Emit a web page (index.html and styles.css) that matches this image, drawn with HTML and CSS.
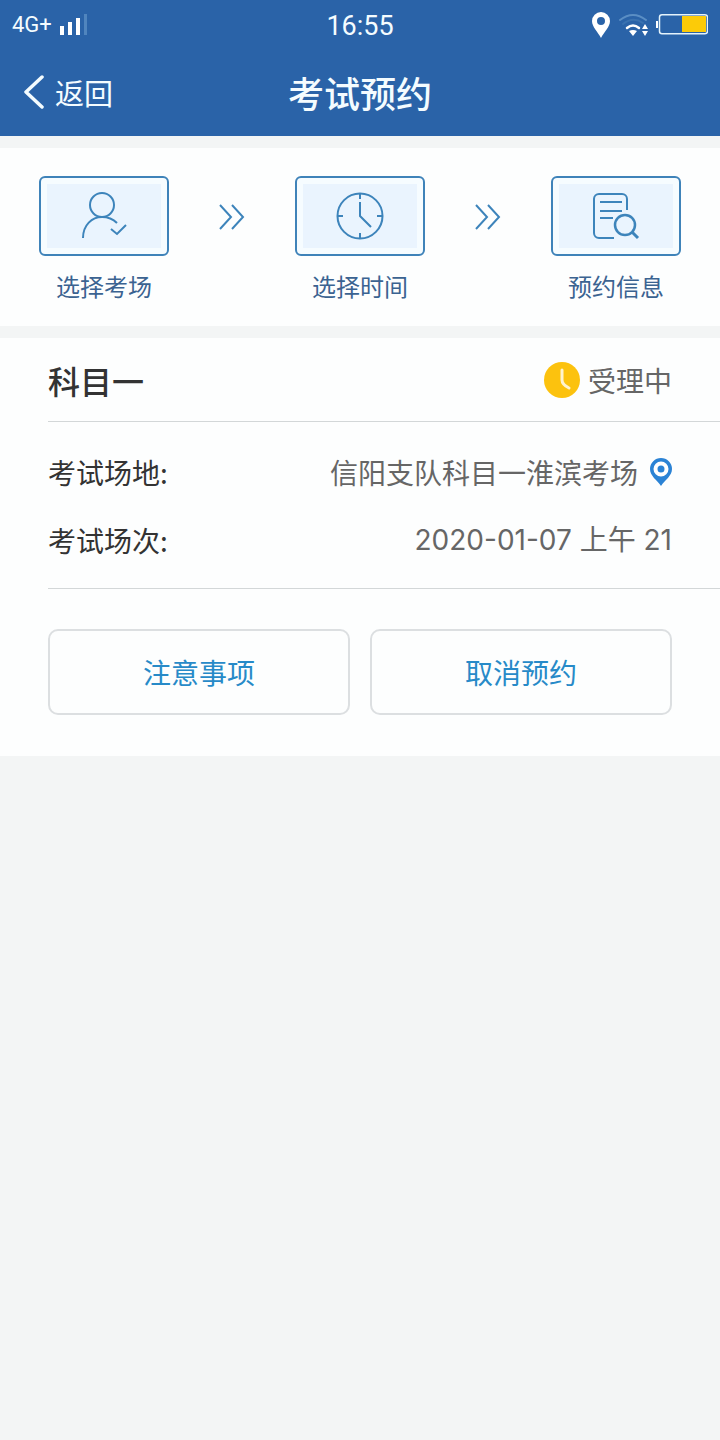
FILE: index.html
```html
<!DOCTYPE html>
<html lang="zh-CN">
<head>
<meta charset="utf-8">
<meta name="viewport" content="width=device-width, initial-scale=1">
<title>考试预约</title>
<link rel="stylesheet" href="styles.css">
</head>
<body>
<header class="top">
  <div class="status">
    <div class="status-side">
      <span class="network">4G+</span>
      <svg class="signal" width="30" height="26" viewBox="0 0 30 26" aria-hidden="true">
        <path d="M0 14h4v9H0zM8 10h4v13H8zM16 6h4v17h-4z" fill="#fff"/>
        <path d="M24 2h3v21h-3z" fill="#5085be"/>
      </svg>
    </div>
    <time class="clock">16:55</time>
    <div class="status-side status-right">
      <svg width="18" height="26" viewBox="0 0 18 26" aria-hidden="true">
        <path d="M9 0a9 9 0 0 0-9 9c0 6 6 11 9 17 3-6 9-11 9-17a9 9 0 0 0-9-9zm0 5a4 4 0 1 1 0 8 4 4 0 0 1 0-8z" fill="#fff" fill-rule="evenodd"/>
      </svg>
      <svg class="wifi" width="30" height="24" viewBox="0 0 30 24" aria-hidden="true">
        <g fill="none" stroke-linecap="round">
          <path d="M2 7Q15-3 28 7" stroke="#5a8ec4" stroke-width="2"/>
          <path d="M5 11Q15 3 25 10" stroke="#3a72b0" stroke-width="2"/>
          <path d="M9 15Q15 10 21 15" stroke="#fff" stroke-width="2.5"/>
        </g>
        <path d="M11 18q4-2 8 0l-4 5zM24 16l3-5 3 5zM24 18h6l-3 5z" fill="#fff"/>
      </svg>
      <svg width="52" height="22" viewBox="0 0 52 22" aria-hidden="true">
        <path d="M0 7h2v7H0z" fill="#fff"/>
        <rect x="3.500" y=".8" width="48" height="19" rx="2.500" fill="none" stroke="#e4f3fb" stroke-width="1.500"/>
        <path d="M26 2h24v16H26z" fill="#fccb08"/>
      </svg>
    </div>
  </div>
  <nav class="bar">
    <a class="back" href="#">
      <svg width="20" height="34" viewBox="0 0 20 34" aria-hidden="true"><path d="M18 2L2 17l16 15" fill="none" stroke="#f4fcff" stroke-width="3.500" stroke-linecap="round" stroke-linejoin="round"/></svg>
      <span>返回</span>
    </a>
    <h1 class="page-title">考试预约</h1>
  </nav>
</header>

<main>
  <section class="steps">
    <div class="step">
      <div class="step-box">
        <svg class="line-icon" width="48" height="48" viewBox="0 0 48 48" aria-hidden="true">
          <circle cx="22" cy="13" r="12"/>
          <path d="M3 46C3 33 12 25 22 25c6 0 11 2 15 6M31 37l6 5 9-9"/>
        </svg>
      </div>
      <div class="step-label">选择考场</div>
    </div>
    <svg class="line-icon arrow" width="26" height="26" viewBox="0 0 26 26" aria-hidden="true"><path d="M1 1l11 12L1 25M13 1l11 12-11 12"/></svg>
    <div class="step">
      <div class="step-box">
        <svg class="line-icon" width="48" height="48" viewBox="0 0 48 48" aria-hidden="true">
          <circle cx="24" cy="24" r="22.500"/>
          <path d="M24 2v5M24 41v5M2 24h5M41 24h5M24 10v14l11 11"/>
        </svg>
      </div>
      <div class="step-label">选择时间</div>
    </div>
    <svg class="line-icon arrow" width="26" height="26" viewBox="0 0 26 26" aria-hidden="true"><path d="M1 1l11 12L1 25M13 1l11 12-11 12"/></svg>
    <div class="step">
      <div class="step-box">
        <svg class="line-icon" width="48" height="48" viewBox="0 0 48 48" aria-hidden="true">
          <path d="M22 46H7a5 5 0 0 1-5-5V7a5 5 0 0 1 5-5h23a5 5 0 0 1 5 5v11M8 10h22M8 19h22M8 26h13"/>
          <circle cx="33" cy="33" r="10" stroke-width="2.500"/>
          <path d="M40 40l6 6" stroke-width="3"/>
        </svg>
      </div>
      <div class="step-label">预约信息</div>
    </div>
  </section>

  <section class="card">
    <div class="card-head">
      <h2 class="subject">科目一</h2>
      <div class="state">
        <svg width="36" height="36" viewBox="0 0 36 36" aria-hidden="true"><circle cx="18" cy="18" r="18" fill="#fcc20e"/><path d="M18 8v10c0 3 3 6 7 8" fill="none" stroke="#fff3d0" stroke-width="3" stroke-linecap="round" stroke-linejoin="round"/></svg>
        <span>受理中</span>
      </div>
    </div>
    <dl class="details">
      <div class="detail">
        <dt>考试场地:</dt>
        <dd>信阳支队科目一淮滨考场
          <svg width="22" height="28" viewBox="0 0 22 28" aria-hidden="true"><path d="M11 0A11 11 0 0 0 0 11c0 7 7 11 11 17 4-6 11-10 11-17A11 11 0 0 0 11 0z" fill="#2b83d5"/><circle cx="11" cy="11" r="5.500" fill="#2b83d5" stroke="#fff" stroke-width="4"/></svg>
        </dd>
      </div>
      <div class="detail">
        <dt>考试场次:</dt>
        <dd><time class="slot">2020-01-07 上午 21</time></dd>
      </div>
    </dl>
    <div class="actions">
      <button class="action" type="button">注意事项</button>
      <button class="action" type="button">取消预约</button>
    </div>
  </section>
</main>
</body>
</html>
```
FILE: styles.css
```css
* {
  box-sizing: border-box;
}

body {
  margin: 0;
  background: #f3f5f5;
  color: #333;
  font-family: "Noto Sans CJK SC", sans-serif;
  font-size: 28px;
  line-height: 40px;
}

.top {
  background: #2a63a8;
  color: #f4fcff;
}

.status {
  display: grid;
  grid-template-columns: 1fr auto 1fr;
  align-items: center;
  height: 50px;
  padding: 0 12px;
  font-family: Roboto, sans-serif;
}

.status-side {
  display: flex;
  align-items: center;
  gap: 8px;
}

.status-right {
  justify-content: flex-end;
}

.network {
  font-size: 22px;
}

.clock {
  padding-top: 2px;
  font-size: 27px;
}

.bar {
  display: grid;
  grid-template-columns: 1fr auto 1fr;
  align-items: center;
  height: 86px;
  padding: 0 24px 2px;
}

.back {
  display: flex;
  align-items: center;
  gap: 11px;
  color: inherit;
  font-size: 29px;
  text-decoration: none;
}

.page-title {
  margin: 0;
  font-size: 36px;
  font-weight: 500;
}

.steps {
  display: flex;
  justify-content: space-between;
  margin-top: 12px;
  padding: 28px 39px 20px;
  background: #fdfefe;
}

.step-box {
  display: flex;
  align-items: center;
  justify-content: center;
  width: 130px;
  height: 80px;
  border: 2px solid #3f83b9;
  border-radius: 6px;
  background: #eaf4fe;
  box-shadow: inset 0 0 0 6px #f6fcff;
}

.line-icon {
  fill: none;
  stroke: #3d84bb;
  stroke-width: 2;
}

.arrow {
  margin-top: 28px;
}

.step-label {
  margin-top: 10px;
  color: #3b6391;
  font-size: 24px;
  text-align: center;
}

.card {
  margin-top: 12px;
  padding: 0 0 41px 48px;
  background: #fdfefe;
}

.card-head {
  display: flex;
  align-items: center;
  justify-content: space-between;
  height: 84px;
  padding-right: 48px;
  border-bottom: 1px solid #d3d7d8;
}

.subject {
  margin: 0;
  font-size: 32px;
  font-weight: 500;
}

.state {
  display: flex;
  align-items: center;
  gap: 8px;
  color: #666;
}

.details {
  display: grid;
  gap: 28px;
  margin: 0;
  padding: 30px 48px 28px 0;
  border-bottom: 1px solid #d3d7d8;
}

.detail {
  display: flex;
  justify-content: space-between;
}

.detail dd {
  display: flex;
  align-items: center;
  gap: 12px;
  margin: 0;
  color: #666;
}

.slot {
  font-family: Inter, "Noto Sans CJK SC", sans-serif;
}

.actions {
  display: grid;
  grid-template-columns: 1fr 1fr;
  gap: 20px;
  padding: 40px 48px 0 0;
}

.action {
  height: 86px;
  border: 2px solid #dcdfe1;
  border-radius: 10px;
  background: none;
  color: #278ac8;
  font: inherit;
}
```
